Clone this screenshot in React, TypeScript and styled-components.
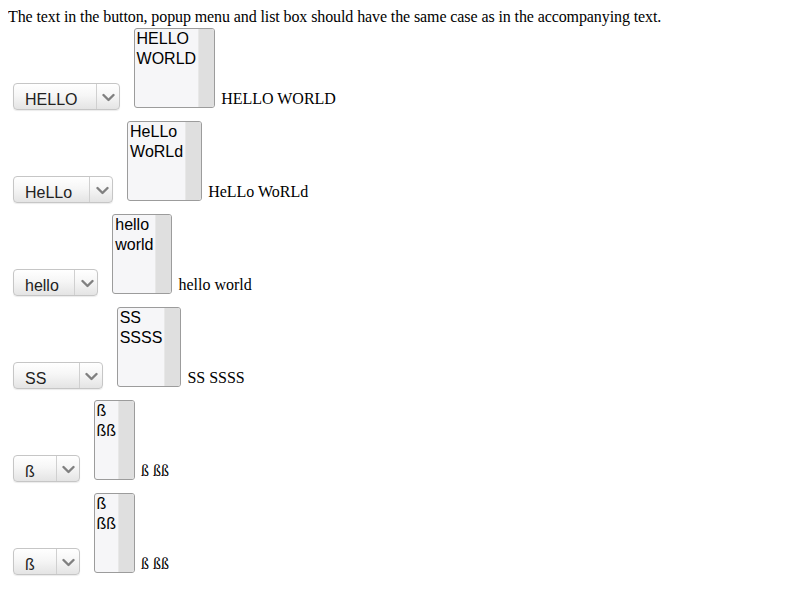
import styled, { createGlobalStyle } from "styled-components";

const GlobalStyle = createGlobalStyle`
  body {
    margin: 8px;
    background: #ffffff;
    color: #000000;
    font-family: "Liberation Serif", "Times New Roman", serif;
    font-size: 16px;
  }
`;

const Intro = styled.div`
  line-height: 18px;
  height: 18px;
  letter-spacing: -0.1px;
`;

const Row = styled.div`
  display: flex;
  align-items: flex-end;
  padding: 2px 0 9px;
`;

const Popup = styled.div`
  box-sizing: border-box;
  display: flex;
  height: 27px;
  margin: 0 14px 0 5px;
  border: 1px solid #c6c6c6;
  border-radius: 4px;
  background: linear-gradient(#ffffff, #f6f6f6 45%, #e4e4e4);
  box-shadow: 0 1px 1px rgba(0, 0, 0, 0.08);
  font-family: "Liberation Sans", Arial, sans-serif;
  font-size: 16px;
  color: #222222;
`;

const PopupLabel = styled.div`
  display: grid;
  padding: 7px 11px 0;
  line-height: 18px;
`;

const PopupOption = styled.span<{ $shown: boolean }>`
  grid-area: 1 / 1;
  white-space: nowrap;
  visibility: ${(p) => (p.$shown ? "visible" : "hidden")};
`;

const PopupArrow = styled.div`
  display: flex;
  align-items: center;
  justify-content: center;
  width: 23px;
  padding: 1px 0 0 2px;
  box-sizing: border-box;
  border-left: 1px solid #d0d0d0;
`;

const ListBox = styled.div`
  box-sizing: border-box;
  display: flex;
  height: 80px;
  margin-bottom: 2px;
  border: 1px solid #9c9c9c;
  border-radius: 3px;
  background: #f6f6f8;
  overflow: hidden;
  font-family: "Liberation Sans", Arial, sans-serif;
  font-size: 16px;
  color: #000000;
`;

const ListOptions = styled.div`
  display: flex;
  flex-direction: column;
  padding: 1px 2px 0 2px;
`;

const ListOption = styled.div`
  line-height: 18px;
  margin-bottom: 2px;
  white-space: nowrap;
`;

const ScrollTrack = styled.div`
  width: 15px;
  background: #dfdfdf;
  border-left: 1px solid #e8e8e8;
`;

const Caption = styled.span`
  margin: 0 0 2px 6px;
  line-height: 18px;
  white-space: nowrap;
`;

const Chevron = () => (
  <svg width="13" height="9" viewBox="0 0 13 9">
    <polyline
      points="1.5,2 6.5,7 11.5,2"
      fill="none"
      stroke="#808080"
      strokeWidth="2.4"
      strokeLinecap="round"
      strokeLinejoin="round"
    />
  </svg>
);

const rows = [
  { options: ["HELLO", "WORLD"] },
  { options: ["HeLLo", "WoRLd"] },
  { options: ["hello", "world"] },
  { options: ["SS", "SSSS"] },
  { options: ["ß", "ßß"] },
  { options: ["ß", "ßß"] },
];

export default function App() {
  return (
    <>
      <GlobalStyle />
      <Intro>
        The text in the button, popup menu and list box should have the same
        case as in the accompanying text.
      </Intro>
      {rows.map((row, i) => (
        <Row key={i}>
          <Popup>
            <PopupLabel>
              {row.options.map((o, j) => (
                <PopupOption key={j} $shown={j === 0}>
                  {o}
                </PopupOption>
              ))}
            </PopupLabel>
            <PopupArrow>
              <Chevron />
            </PopupArrow>
          </Popup>
          <ListBox>
            <ListOptions>
              {row.options.map((o, j) => (
                <ListOption key={j}>{o}</ListOption>
              ))}
            </ListOptions>
            <ScrollTrack />
          </ListBox>
          <Caption>{row.options.join(" ")}</Caption>
        </Row>
      ))}
    </>
  );
}
